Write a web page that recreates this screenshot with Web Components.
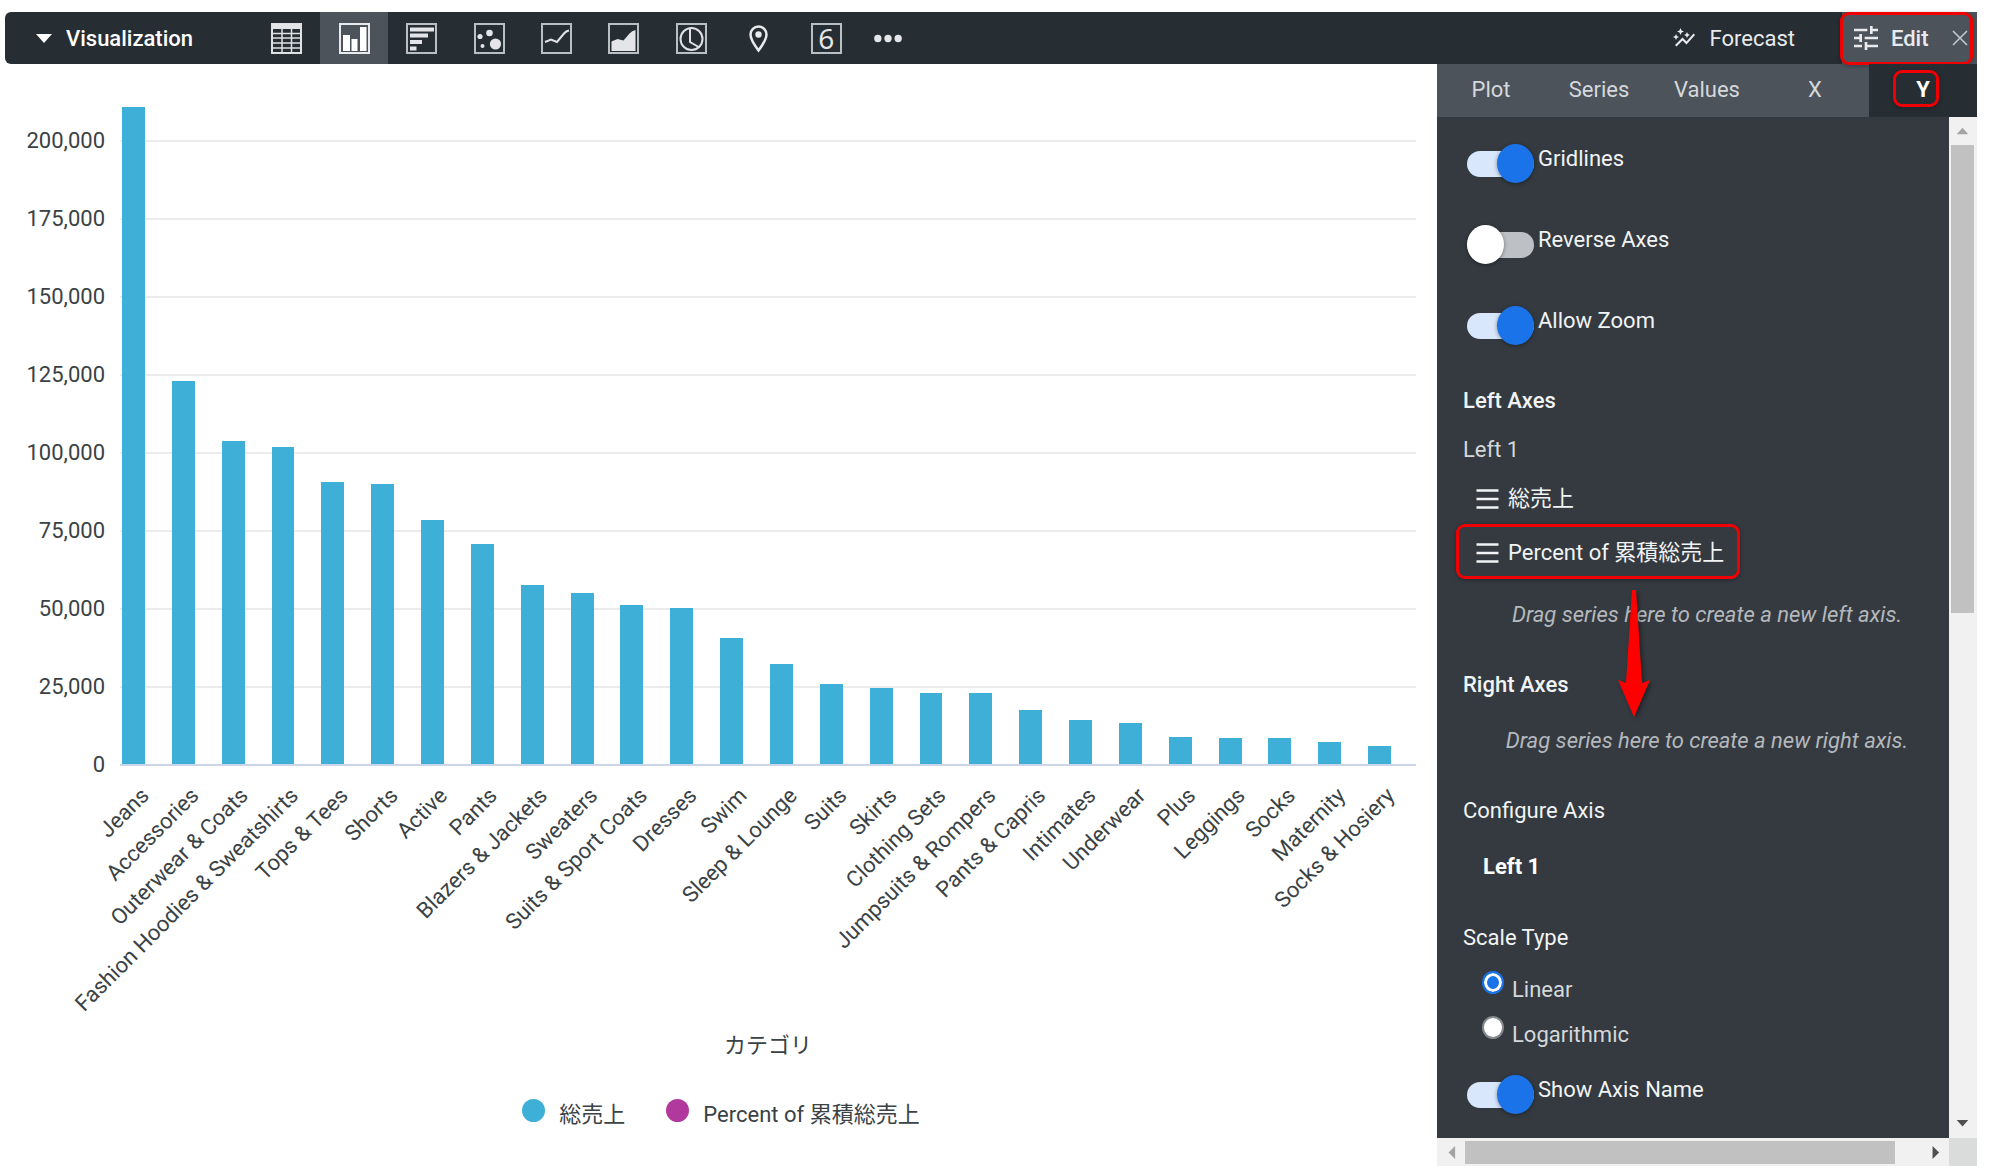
<!DOCTYPE html>
<html lang="ja">
<head>
<meta charset="utf-8">
<title>Visualization</title>
<style>
  html { background: #fff; }
  body { margin: 0; font-family: Roboto, "Noto Sans CJK JP", sans-serif; font-size: 22px; line-height: 28px; color: #3a4245; }
</style>
</head>
<body>
<viz-app></viz-app>
<script>
const define = (name, html, setup) => {
  const tpl = document.createElement('template');
  tpl.innerHTML = html;
  customElements.define(name, class extends HTMLElement {
    connectedCallback() {
      if (this.shadowRoot) return;
      const root = this.attachShadow({ mode: 'open' });
      root.append(tpl.content.cloneNode(true));
      if (setup) setup(this, root);
    }
  });
};

const frame = '<rect x="1" y="1" width="29" height="29" fill="none" stroke="#b9c0c5" stroke-width="2"/>';
const ICONS = {
  table: ['0 0 31 31', '<rect x="1" y="1" width="29" height="29" fill="none" stroke="#dfe1e5" stroke-width="2"/><path d="M1 1h29v5H1z" fill="#e3e5e8"/><path d="M1 10.500h29M1 15h29M1 20h29M1 25h29M11 6v24M20.500 6v24" stroke="#dfe1e5" stroke-width="1.500" fill="none"/>'],
  column: ['0 0 31 31', '<rect x="1" y="1" width="29" height="29" fill="none" stroke="#e8eaed" stroke-width="2"/><path d="M4 12h7v16H4zM12.500 16h6v12h-6zM21 4h6.500v24H21z" fill="#fff"/>'],
  bar: ['0 0 31 31', frame + '<path d="M4 4.500h24v4H4zM4 10.500h18v4H4zM4 17h12v4H4zM4 23.500h6.500v4H4z" fill="#e3e5e8"/>'],
  scatter: ['0 0 31 31', frame + '<g fill="#e3e5e8"><circle cx="6" cy="13.500" r="2.600"/><circle cx="15.500" cy="10" r="3.300"/><circle cx="21.500" cy="21" r="5.600"/><circle cx="8.500" cy="23" r="2"/></g>'],
  line: ['0 0 31 31', frame + '<path d="M4 19l6-2.500 6 2.500 7-8.500q2-2.500 5-3" fill="none" stroke="#dfe1e5" stroke-width="2"/>'],
  area: ['0 0 31 31', frame + '<path d="M3.500 18.500l6-2.500 6 1.500 6-7q2.500-3 6-3.500v21h-24z" fill="#e3e5e8"/>'],
  pie: ['0 0 31 31', frame + '<g fill="none" stroke="#dfe1e5" stroke-width="2"><circle cx="15.500" cy="16" r="11"/><path d="M14 5v14l9.500 5.500"/></g>'],
  pin: ['0 0 31 31', '<path d="M15.500 27.500C11 21.500 7.500 16.500 7.500 11.500a8 8 0 0 1 16 0c0 5-3.500 10-8 16z" fill="none" stroke="#e8eaed" stroke-width="2.500"/><circle cx="15.500" cy="11.500" r="3.200" fill="#e8eaed"/>'],
  more: ['0 0 31 31', '<g fill="#e3e5e8"><circle cx="5" cy="15.500" r="3.800"/><circle cx="15.500" cy="15.500" r="3.800"/><circle cx="26" cy="15.500" r="3.800"/></g>'],
  forecast: ['0 0 24 24', '<path fill="#e8eaed" d="M14.060 9.940L12 9l2.060-.94L15 6l.94 2.060L18 9l-2.060.94L15 12l-.94-2.060zM4 14l.94-2.060L7 11l-2.060-.94L4 8l-.94 2.060L1 11l2.060.94L4 14zm4.500-5l1.090-2.410L12 5.500 9.590 4.410 8.500 2 7.410 4.410 5 5.500l2.410 1.090L8.500 9zm-4 11.500l6-6.010 4 4L23 8.930l-1.410-1.410-7.090 7.970-4-4L3 19l1.500 1.500z"/>'],
  tune: ['0 0 24 24', '<path fill="#e8eaed" d="M3 17v2h6v-2H3zM3 5v2h10V5H3zm10 16v-2h8v-2h-8v-2h-2v6h2zM7 9v2H3v2h4v2h2V9H7zm14 4v-2H11v2h10zm-6-4h2V7h4V5h-4V3h-2v6z"/>'],
  close: ['0 0 16 16', '<path d="M1 1l14 14M15 1L1 15" stroke="#c6cbcf" stroke-width="1.500" fill="none"/>'],
  caret: ['0 0 16 9', '<path d="M0 0h16L8 9z" fill="#fff"/>'],
  handle: ['0 0 22 20', '<path d="M0 1.500h22M0 10h22M0 18.500h22" stroke="#f1f3f4" stroke-width="2.500"/>']
};

define('viz-icon', `<style>:host{display:block;flex:none;width:31px;height:31px}svg{display:block;width:100%;height:100%}</style><svg aria-hidden="true"></svg>`,
  (el, root) => {
    const [box, body] = ICONS[el.getAttribute('name')];
    const svg = root.querySelector('svg');
    svg.setAttribute('viewBox', box);
    svg.innerHTML = body;
  });

/* A red outline drawn over the control passed in. */
define('call-out', `<style>
  :host{display:grid;position:relative}
  :host::after{content:"";position:absolute;inset:var(--inset,0);border:3px solid #f00000;border-radius:9px;box-shadow:0 1px 4px rgba(0,0,0,.3);pointer-events:none}
</style><slot></slot>`);

define('viz-toolbar', `<style>
  :host{display:flex;height:52px;background:#262d33;border-radius:6px 0 0 6px;color:#e8eaed}
  button{display:flex;align-items:center;justify-content:center;border:0;margin:0;padding:0;background:none;color:inherit;font:inherit}
  .title{width:248px;justify-content:flex-start;padding-left:31px;gap:14px;font-weight:500;color:#fff;box-sizing:border-box}
  .title viz-icon{width:16px;height:9px}
  .text{padding-top:2px}
  .types{display:grid;grid-template-columns:repeat(9,1fr);width:607px}
  .active{background:#4c535b}
  .more{width:56px}
  .more viz-icon{width:30px}
  .six{width:31px;height:31px;box-sizing:border-box;border:2px solid #b9c0c5;font:28px/27px "Noto Sans",sans-serif;color:#e3e5e8}
  .forecast{margin-left:auto;gap:14px;padding-right:47px}
  .forecast viz-icon{width:24px;height:24px}
  .edit{background:#4c535b;width:135px;--inset:0 4px -1px -2px}
  .edit div{display:flex;align-items:center;padding-left:8px}
  .edit .open{font-weight:500;gap:9px}
  .edit .open viz-icon{width:32px;height:32px}
  .edit .close{margin-left:auto;margin-right:9px}
  .edit .close viz-icon{width:16px;height:16px}
</style>
<button class="title"><viz-icon name="caret"></viz-icon><span class="text">Visualization</span></button>
<div class="types">
  <button aria-label="Table"><viz-icon name="table"></viz-icon></button>
  <button aria-label="Column" class="active"><viz-icon name="column"></viz-icon></button>
  <button aria-label="Bar"><viz-icon name="bar"></viz-icon></button>
  <button aria-label="Scatter"><viz-icon name="scatter"></viz-icon></button>
  <button aria-label="Line"><viz-icon name="line"></viz-icon></button>
  <button aria-label="Area"><viz-icon name="area"></viz-icon></button>
  <button aria-label="Pie"><viz-icon name="pie"></viz-icon></button>
  <button aria-label="Map"><viz-icon name="pin"></viz-icon></button>
  <button aria-label="Single value"><span class="six">6</span></button>
</div>
<button class="more" aria-label="More"><viz-icon name="more"></viz-icon></button>
<button class="forecast"><viz-icon name="forecast"></viz-icon><span class="text">Forecast</span></button>
<call-out class="edit"><div><button class="open"><viz-icon name="tune"></viz-icon><span class="text">Edit</span></button><button class="close" aria-label="Close"><viz-icon name="close"></viz-icon></button></div></call-out>`);

const DATA = [['Jeans',210.5],['Accessories',122.8],['Outerwear & Coats',103.6],['Fashion Hoodies & Sweatshirts',101.7],['Tops & Tees',90.4],['Shorts',89.7],['Active',78.2],['Pants',70.4],['Blazers & Jackets',57.2],['Sweaters',54.8],['Suits & Sport Coats',51.1],['Dresses',50],['Swim',40.4],['Sleep & Lounge',32.1],['Suits',25.5],['Skirts',24.3],['Clothing Sets',22.6],['Jumpsuits & Rompers',22.6],['Pants & Capris',17.2],['Intimates',14.1],['Underwear',13],['Plus',8.7],['Leggings',8.2],['Socks',8.2],['Maternity',6.9],['Socks & Hosiery',5.7]];
const MAX = 210.5;

define('column-chart', `<style>
  :host{display:grid;grid-template-columns:100px minmax(0,1fr);column-gap:15px;padding:37px 21px 0 0}
  .y{grid-row:1/3;text-align:right;line-height:78px;height:702px;padding-top:1px}
  .plot{display:grid;height:657px;margin-top:6px}
  .lines,.bars{grid-area:1/1}
  .lines{align-self:end}
  .lines i{display:block;box-sizing:border-box;height:78px;border-top:2px solid #ebebec}
  .bars,.x{display:grid;grid-template-columns:repeat(26,minmax(0,1fr))}
  .bars{border-bottom:2px solid #ccd6eb;margin-bottom:-2px}
  .bars i{align-self:end;width:46%;margin-left:4%;background:#3eb0d7}
  .x{height:252px;padding-top:16px;line-height:24px}
  .x div{display:flex;justify-content:flex-end;width:50%;height:24px}
  .x span{flex:none;white-space:nowrap;transform:rotate(-45deg);transform-origin:100% 50%}
  .name{grid-column:2;text-align:center}
</style>
<div class="y"></div><div class="plot"><div class="lines"></div><div class="bars"></div></div><div class="x"></div><div class="name">カテゴリ</div>`,
  (el, root) => {
    const add = (sel, tag, text) => {
      const n = document.createElement(tag);
      if (text) n.textContent = text;
      root.querySelector(sel).append(n);
      return n;
    };
    for (let v = 200000; v >= 0; v -= 25000) {
      add('.y', 'div', v.toLocaleString('en-US'));
      if (v) add('.lines', 'i');
    }
    for (const [name, value] of DATA) {
      add('.bars', 'i').style.height = value / MAX * 100 + '%';
      add('.x', 'div').append(Object.assign(document.createElement('span'), { textContent: name }));
    }
  });

define('chart-legend', `<style>
  :host{display:flex;justify-content:center;gap:41px;padding-top:39px}
  button{display:flex;gap:14px;border:0;padding:0;background:none;font:inherit;line-height:32px;color:inherit}
  i{width:23px;height:23px;border-radius:50%;background:#3eb0d7}
  .pct{background:#b1399e}
</style>
<button><i></i>総売上</button><button><i class="pct"></i>Percent of 累積総売上</button>`);

let uid = 0;
define('toggle-switch', `<style>
  :host{display:flex;gap:4px;height:39px;padding-left:4px}
  input{appearance:none;margin:0;width:67px;height:39px;display:grid;align-items:center}
  input::before{content:"";grid-area:1/1;height:26px;border-radius:13px;background:#bdc1c6}
  input::after{content:"";grid-area:1/1;width:37px;height:39px;border-radius:50%;background:#fff;box-shadow:0 1px 4px rgba(0,0,0,.4)}
  input:checked::before{background:#d8e7fb}
  input:checked::after{background:#1a73e8;justify-self:end}
  label{color:#f1f3f4;line-height:30px}
</style><input type="checkbox" role="switch"><label><slot></slot></label>`,
  (el, root) => {
    const input = root.querySelector('input');
    input.id = root.querySelector('label').htmlFor = 'switch' + (++uid);
    input.checked = el.hasAttribute('on');
  });

define('series-item', `<style>
  :host{display:flex;align-items:center;gap:9px;height:54px;padding-left:13px;color:#f1f3f4}
  viz-icon{width:23px;height:20px}
</style><viz-icon name="handle"></viz-icon><span><slot></slot></span>`);

define('scale-options', `<style>
  :host{display:block;padding:15px 0 18px 19px}
  div{display:flex;gap:8px;height:45px;line-height:45px}
  input{appearance:none;box-sizing:border-box;margin:4px 0 0;width:22px;height:23px;border:2px solid #85898d;border-radius:50%;background:#fff}
  input:checked{border:2px solid #1a73e8;background:#1a73e8;box-shadow:inset 0 0 0 3px #fff}
</style>
<div><input type="radio" name="scale" id="linear" checked><label for="linear">Linear</label></div>
<div><input type="radio" name="scale" id="log"><label for="log">Logarithmic</label></div>`);

define('scroll-bar', `<style>
  :host{display:flex;box-sizing:border-box;background:#f1f1f1}
  :host([vertical]){flex-direction:column;padding:0 3px 0 2px}
  :host(:not([vertical])){padding:3px 0 2px}
  svg{flex:none;width:28px;height:28px}
  :host(:not([vertical])) svg{height:23px}
  i{background:#c1c1c1;flex:0 0 var(--thumb)}
  span{flex:1}
  :host([vertical]) svg{width:23px}
</style>
<svg viewBox="0 0 28 28"><path fill="#a3a3a3"/></svg><i></i><span></span><svg viewBox="0 0 28 28"><path fill="#505050"/></svg>`,
  (el, root) => {
    const [a, b] = root.querySelectorAll('path');
    const v = el.hasAttribute('vertical');
    a.setAttribute('d', v ? 'M7 18h14l-7-8z' : 'M19 6v16l-8-8z');
    b.setAttribute('d', v ? 'M7 9h14l-7 8z' : 'M11 6v16l8-8z');
  });

define('axis-panel', `<style>
  :host{display:block;width:540px;background:#343a40;color:#d5d8db}
  nav{display:grid;grid-template-columns:repeat(5,1fr);height:53px;background:#4c535b}
  nav button{border:0;padding:0 0 2px;background:none;font:inherit;color:#d5d8db}
  nav call-out{background:#262d33;--inset:6px 38px 10px 24px}
  nav call-out button{font-weight:700;color:#fff}
  .view{display:grid;grid-template-columns:1fr 28px;grid-template-rows:auto 28px}
  .body{padding:27px 26px 24px}
  toggle-switch + toggle-switch{margin-top:42px}
  h3,p{margin:0;font-size:22px;font-weight:400;line-height:28px}
  h3{color:#f1f3f4}
  h3.strong{font-weight:500}
  .hint{text-align:center;font-style:italic;color:#b4b8bc;padding-left:28px}
  .g20{margin-top:21px}.g42{margin-top:42px}.g28{margin-top:28px}.g43{margin-top:43px}
  .list{margin-top:8px}
  .list call-out{--inset:-2px 183px 1px -7px}
  .config{padding-left:20px;font-weight:700;color:#fff}
  .drop{position:relative}
  .arrow{position:absolute;left:154px;top:-11px;width:34px;height:130px;filter:drop-shadow(2px 2px 2px rgba(0,0,0,.4))}
  .v{--thumb:468px}
  .h{--thumb:430px}
  .corner{background:#dadcdc}
</style>
<nav><button>Plot</button><button>Series</button><button>Values</button><button>X</button><call-out><button>Y</button></call-out></nav>
<div class="view">
  <div class="body">
    <toggle-switch on>Gridlines</toggle-switch>
    <toggle-switch>Reverse Axes</toggle-switch>
    <toggle-switch on>Allow Zoom</toggle-switch>
    <h3 class="strong g42">Left Axes</h3>
    <p class="g20">Left 1</p>
    <div class="list">
      <series-item>総売上</series-item>
      <call-out><series-item>Percent of 累積総売上</series-item></call-out>
    </div>
    <div class="drop g20">
      <p class="hint">Drag series here to create a new left axis.</p>
      <svg class="arrow" viewBox="0 0 34 130" aria-hidden="true"><path d="M15 0h4l6 93 8-3-16 37L1 90l8 3z" fill="#f00"/></svg>
    </div>
    <h3 class="strong g42">Right Axes</h3>
    <p class="hint g28">Drag series here to create a new right axis.</p>
    <h3 class="g42">Configure Axis</h3>
    <p class="config g28">Left 1</p>
    <h3 class="g43">Scale Type</h3>
    <scale-options></scale-options>
    <toggle-switch on>Show Axis Name</toggle-switch>
  </div>
  <scroll-bar class="v" vertical></scroll-bar>
  <scroll-bar class="h"></scroll-bar>
  <div class="corner"></div>
</div>`);

define('viz-app', `<style>
  :host{display:block;padding:12px 23px 6px 5px}
  main{display:grid;grid-template-columns:minmax(0,1fr) auto;align-items:start}
</style>
<viz-toolbar></viz-toolbar>
<main><section><column-chart></column-chart><chart-legend></chart-legend></section><axis-panel></axis-panel></main>`);
</script>
</body>
</html>
